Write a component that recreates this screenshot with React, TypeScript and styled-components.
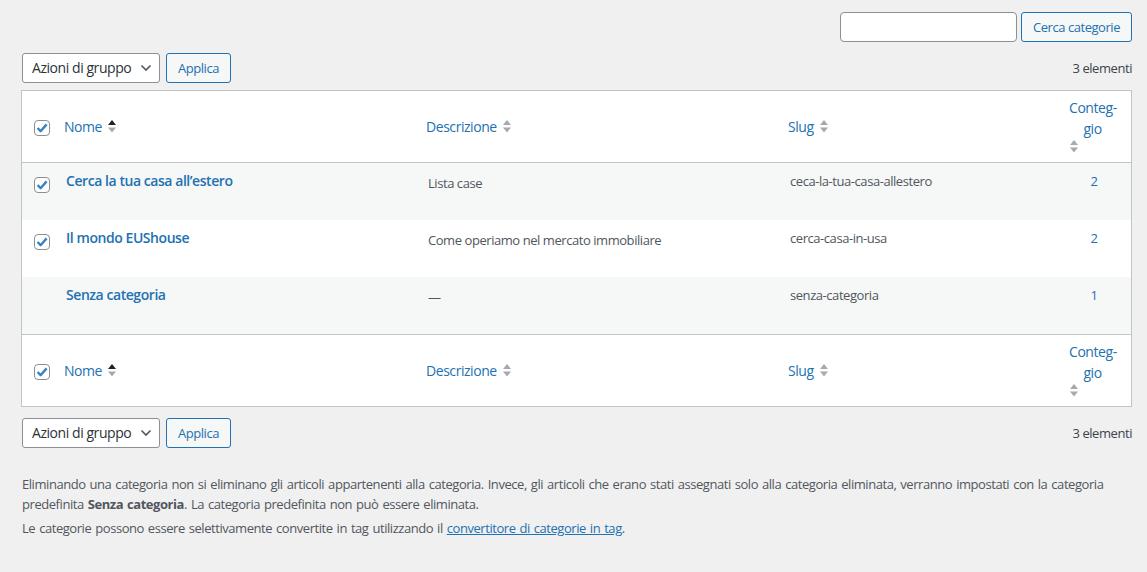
import React from "react";
import styled, { createGlobalStyle } from "styled-components";

const Global = createGlobalStyle`
  html, body { margin: 0; padding: 0; background: #f0f0f1; }
  body {
    font-family: "Segoe UI", "Open Sans", sans-serif;
    font-size: 13px;
    line-height: 1.4em;
    letter-spacing: -0.034em;
    color: #3c434a;
  }
  * { box-sizing: border-box; }
`;

const Page = styled.div`
  padding: 12px 15px 40px 21px;
`;

const SearchRow = styled.div`
  display: flex;
  justify-content: flex-end;
  gap: 4px;
`;

const SearchInput = styled.input`
  width: 177px;
  height: 30px;
  border: 1px solid #8c8f94;
  border-radius: 4px;
  background: #fff;
  padding: 0 8px;
  font: inherit;
`;

const Button = styled.button<{ $w: number }>`
  width: ${(p) => p.$w}px;
  height: 30px;
  padding: 0;
  border: 1px solid #2271b1;
  border-radius: 3px;
  background: #f6f7f7;
  color: #2271b1;
  font-family: inherit;
  font-size: 13px;
  letter-spacing: inherit;
  line-height: 28px;
  cursor: pointer;
  white-space: nowrap;
`;

const TableNav = styled.div<{ $top?: boolean }>`
  display: flex;
  align-items: center;
  height: 30px;
  margin: ${(p) => (p.$top ? "11px 0 7px" : "11px 0 0")};
  padding-left: 1px;
`;

const Actions = styled.div`
  display: flex;
  gap: 6px;
  align-items: center;
`;

const Select = styled.div`
  width: 138px;
  height: 30px;
  border: 1px solid #8c8f94;
  border-radius: 3px;
  background: #fff;
  color: #2c3338;
  font-size: 14px;
  line-height: 28px;
  padding: 0 7px 0 9px;
  display: flex;
  align-items: center;
  justify-content: space-between;
`;

const Count = styled.div`
  margin-left: auto;
  color: #3c434a;
  font-size: 13px;
`;

const Table = styled.table`
  width: 100%;
  border: 1px solid #c3c4c7;
  border-spacing: 0;
  background: #fff;
  table-layout: fixed;
`;

const HeadCell = styled.th<{ $w: number; $foot?: boolean }>`
  width: ${(p) => p.$w}px;
  padding: 6px 8px 8px;
  text-align: left;
  font-weight: 400;
  font-size: 14px;
  line-height: 21px;
  vertical-align: middle;
  border-${(p) => (p.$foot ? "top" : "bottom")}: 1px solid #c3c4c7;
`;

const CheckHead = styled.td<{ $foot?: boolean }>`
  width: 34px;
  padding: 0 0 0 12px;
  vertical-align: middle;
  border-${(p) => (p.$foot ? "top" : "bottom")}: 1px solid #c3c4c7;
`;

const SortLink = styled.a`
  color: #2271b1;
  text-decoration: none;
  display: inline-flex;
  align-items: center;
  gap: 5px;
  padding-top: 1px;
`;

const CountLink = styled.a`
  color: #2271b1;
  text-decoration: none;
  display: flex;
  flex-direction: column;
  align-items: flex-start;
  width: 47px;
  svg { display: block; }
`;

const CountText = styled.span`
  display: block;
  width: 47px;
  text-align: center;
`;

const Row = styled.tr<{ $alt?: boolean }>`
  background: ${(p) => (p.$alt ? "#f6f7f7" : "#fff")};
  height: 57px;
`;

const Cell = styled.td<{ $center?: boolean; $drop?: number }>`
  padding: ${(p) => 8 + (p.$drop || 0)}px ${(p) => (p.$center ? "14px" : "10px")} 8px 10px;
  vertical-align: top;
  text-align: ${(p) => (p.$center ? "center" : "left")};
  color: #50575e;
  font-size: 13px;
  line-height: 20px;
`;

const CheckCell = styled.th`
  padding: 11px 0 0 12px;
  vertical-align: top;
  text-align: left;
`;

const RowTitle = styled.a`
  color: #2271b1;
  font-weight: 600;
  font-size: 14px;
  text-decoration: none;
  line-height: 18px;
`;

const CountValue = styled.a`
  color: #2271b1;
  text-decoration: none;
`;

const Box = styled.span`
  display: inline-flex;
  align-items: center;
  justify-content: center;
  width: 16px;
  height: 16px;
  border: 1px solid #8c8f94;
  border-radius: 4px;
  background: #fff;
  vertical-align: middle;
`;

const Notes = styled.div`
  margin-top: 27px;
  padding-left: 1px;
`;

const Note = styled.p`
  margin: 0 0 5px;
  font-size: 13px;
  line-height: 19.5px;
  color: #50575e;
  word-spacing: 1px;
  max-width: 1095px;
`;

const NoteLink = styled.a`
  color: #2271b1;
  text-decoration: underline;
`;

const Check = () => (
  <Box>
    <svg width="12" height="12" viewBox="0 0 12 12">
      <path d="M1.6 6 L4.6 9.2 L10.6 2.4" fill="none" stroke="#3582c4" strokeWidth="2.4" strokeLinejoin="round" />
    </svg>
  </Box>
);

const Sorter = ({ active }: { active?: boolean }) => (
  <svg width="10" height="15" viewBox="0 0 10 15">
    <path d="M1 6 L5 1 L9 6 Z" fill={active ? "#1d2327" : "#a7aaad"} />
    <path d="M1 8.5 L9 8.5 L5 13.5 Z" fill="#a7aaad" />
  </svg>
);

const Chevron = () => (
  <svg width="12" height="8" viewBox="0 0 12 8">
    <path d="M1.5 1.5 L6 6 L10.5 1.5" fill="none" stroke="#50575e" strokeWidth="1.6" />
  </svg>
);

const rows = [
  { name: "Cerca la tua casa all’estero", desc: "Lista case", slug: "ceca-la-tua-casa-allestero", count: 2, check: true },
  { name: "Il mondo EUShouse", desc: "Come operiamo nel mercato immobiliare", slug: "cerca-casa-in-usa", count: 2, check: true },
  { name: "Senza categoria", desc: "—", slug: "senza-categoria", count: 1, check: false },
];

const HeaderRow = ({ foot }: { foot?: boolean }) => (
  <tr>
    <CheckHead $foot={foot}><Check /></CheckHead>
    <HeadCell $w={362} $foot={foot}><SortLink>Nome <Sorter active /></SortLink></HeadCell>
    <HeadCell $w={362} $foot={foot}><SortLink>Descrizione <Sorter /></SortLink></HeadCell>
    <HeadCell $w={281} $foot={foot}><SortLink>Slug <Sorter /></SortLink></HeadCell>
    <HeadCell $w={70} $foot={foot}>
      <CountLink>
        <CountText>Conteg-</CountText>
        <CountText>gio</CountText>
        <Sorter />
      </CountLink>
    </HeadCell>
  </tr>
);

const Nav = ({ top }: { top?: boolean }) => (
  <TableNav $top={top}>
    <Actions>
      <Select>Azioni di gruppo <Chevron /></Select>
      <Button $w={65}>Applica</Button>
    </Actions>
    <Count>3 elementi</Count>
  </TableNav>
);

export default function App() {
  return (
    <Page>
      <Global />
      <SearchRow>
        <SearchInput />
        <Button $w={111}>Cerca categorie</Button>
      </SearchRow>
      <Nav top />
      <Table>
        <thead>
          <HeaderRow />
        </thead>
        <tbody>
          {rows.map((r, i) => (
            <Row key={r.slug} $alt={i % 2 === 0}>
              <CheckCell>{r.check ? <Check /> : null}</CheckCell>
              <Cell><RowTitle>{r.name}</RowTitle></Cell>
              <Cell $drop={2}>{r.desc}</Cell>
              <Cell>{r.slug}</Cell>
              <Cell $center><CountValue>{r.count}</CountValue></Cell>
            </Row>
          ))}
        </tbody>
        <tfoot>
          <HeaderRow foot />
        </tfoot>
      </Table>
      <Nav />
      <Notes>
        <Note>
          Eliminando una categoria non si eliminano gli articoli appartenenti alla categoria. Invece, gli articoli che erano stati assegnati solo alla categoria eliminata, verranno impostati con la categoria predefinita <strong>Senza categoria</strong>. La categoria predefinita non può essere eliminata.
        </Note>
        <Note>
          Le categorie possono essere selettivamente convertite in tag utilizzando il <NoteLink href="#">convertitore di categorie in tag</NoteLink>.
        </Note>
      </Notes>
    </Page>
  );
}
